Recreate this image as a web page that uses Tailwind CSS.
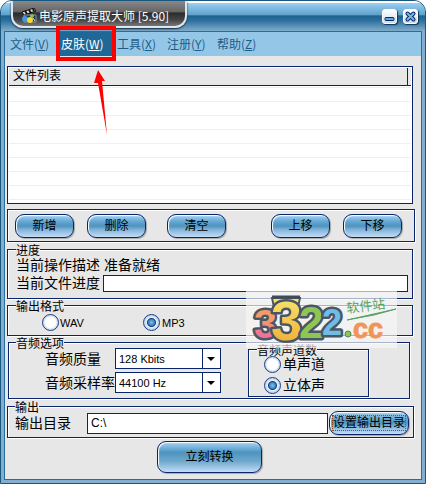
<!DOCTYPE html>
<html lang="zh-CN">
<head>
    <meta charset="UTF-8">
    <meta name="viewport" content="width=device-width, initial-scale=1.0">
    <title>电影原声提取大师 [5.90]</title>
    <script src="https://cdn.jsdelivr.net/npm/@tailwindcss/browser@4"></script>
</head>
<body class="bg-white min-h-screen flex flex-col text-black text-[12px] leading-4 font-['Liberation_Sans','Noto_Sans_CJK_SC',sans-serif]">

    <div class="relative flex-1 flex flex-col rounded-t-xl overflow-hidden bg-[#84aed0] border border-[#185880]">

        <!-- Title bar -->
        <header class="h-[30px] shrink-0 flex items-start justify-between border-t-2 border-white pl-[10px] pr-[7px] bg-[linear-gradient(#9bd0f2_0%,#5c9fca_44%,#1c628f_45%,#2c6f9c_62%,#7faccd_100%)]">
            <div class="-mt-[2px] h-[27px] w-[176px] flex items-center gap-[2px] pt-1 pl-2 text-white border-2 border-t-0 border-[#dce6ec] rounded-b-xl shadow-[0_1px_2px_#123] bg-[linear-gradient(#888_0%,#666_42%,#2c2c2c_48%,#444_75%,#777_100%)] font-['Noto_Sans_CJK_SC',sans-serif]">
                <svg class="w-4 h-4 shrink-0" viewBox="0 0 16 16">
                    <path d="M1 4L13 0L15 3L3 7Z" fill="#ddd" stroke="#111"/>
                    <path d="M4 3l2 3M8 2l2 3M12 1l1 2" stroke="#111" stroke-width="2"/>
                    <path d="M3 7h12v7H3z" fill="#203040" stroke="#8899a5"/>
                    <circle cx="4" cy="11" r="3" fill="#4795de"/>
                    <circle cx="9" cy="12" r="3" fill="#f1dc37"/>
                    <circle cx="11" cy="8" r="2" fill="#7bc354"/>
                    <path d="M12 10l2 3" stroke="#eee"/>
                </svg>
                <h1 class="whitespace-nowrap">电影原声提取大师 [5.90]</h1>
            </div>
            <div class="flex gap-[6px] mt-[6px]">
                <button aria-label="最小化" class="w-[15px] h-[15px] rounded-[3px] border border-white bg-linear-to-b from-white to-[#cfdbe5] shadow-[1px_1px_1px_#0b3858]">
                    <svg viewBox="0 0 13 13"><rect x="2" y="7.500" width="9" height="3" rx="1" fill="#5eaedb" stroke="#08246b"/></svg>
                </button>
                <button aria-label="关闭" class="w-[15px] h-[15px] rounded-[3px] border border-white bg-linear-to-b from-white to-[#cfdbe5] shadow-[1px_1px_1px_#0b3858]">
                    <svg viewBox="0 0 13 13">
                        <path d="M3.500 3.500L9.500 9.500M9.500 3.500L3.500 9.500" stroke="#08246b" stroke-width="4" stroke-linecap="round"/>
                        <path d="M3.500 3.500L9.500 9.500M9.500 3.500L3.500 9.500" stroke="#76bbe0" stroke-width="2" stroke-linecap="round"/>
                    </svg>
                </button>
            </div>
        </header>

        <div class="flex-1 flex flex-col mx-[3px] mb-[3px] border border-t-0 border-[#2a6d9c] bg-[#e7e7e7]">

            <!-- Menu -->
            <nav class="h-[25px] shrink-0 flex items-stretch bg-[#94c7e7] border-t border-[#2a6d9c] text-[#1f5c85] font-['Noto_Sans_CJK_SC',sans-serif]">
                <a href="#" class="w-[52px] pl-[5px] flex items-center">文件(<u>V</u>)</a>
                <a href="#" class="relative w-[55px] pl-1 flex items-center bg-[#1f6796] text-white">皮肤(<u>W</u>)
                    <span class="absolute -left-[1px] -top-[6px] w-[60px] h-[35px] border-4 border-[#fe0000] z-10"></span>
                </a>
                <a href="#" class="w-[50px] pl-[5px] flex items-center">工具(<u>X</u>)</a>
                <a href="#" class="w-[50px] pl-[5px] flex items-center">注册(<u>Y</u>)</a>
                <a href="#" class="w-[50px] pl-[5px] flex items-center">帮助(<u>Z</u>)</a>
            </nav>

            <main class="flex flex-col pt-[10px] pl-[2px] pr-2">

                <!-- File list -->
                <section class="h-[138px] border border-[#08246b] bg-white p-px">
                    <table class="w-full border-collapse">
                        <thead>
                            <tr class="h-[17px] bg-[#e7e7e7] border-b border-[#08246b]">
                                <th class="p-0 pl-1 text-left font-normal leading-4 border-r border-[#08246b]">文件列表</th>
                                <th class="p-0 w-1"></th>
                            </tr>
                        </thead>
                    </table>
                    <div class="h-[117px] bg-[repeating-linear-gradient(#fff_0px,#fff_1px,#efefef_1px,#efefef_2px,#fff_2px,#fff_14px)]"></div>
                </section>

                <!-- List actions -->
                <section class="mt-[5px] -mr-[2px] h-[33px] border border-[#08246b] shadow-[1px_1px_0_#fff,inset_1px_1px_0_#fff] flex items-center pl-[7px] pr-3">
                    <button class="w-[59px] h-6 rounded-[9px] border border-[#08246b] bg-[linear-gradient(#a9d4f2_0%,#64a7d3_30%,#4e94bf_50%,#8ab8dc_70%,#c3dcf6_100%)] shadow-[1px_1px_1px_#aaa,inset_1px_1px_1px_#fff]">新增</button>
                    <button class="ml-[13px] w-[59px] h-6 rounded-[9px] border border-[#08246b] bg-[linear-gradient(#a9d4f2_0%,#64a7d3_30%,#4e94bf_50%,#8ab8dc_70%,#c3dcf6_100%)] shadow-[1px_1px_1px_#aaa,inset_1px_1px_1px_#fff]">删除</button>
                    <button class="ml-[21px] w-[59px] h-6 rounded-[9px] border border-[#08246b] bg-[linear-gradient(#a9d4f2_0%,#64a7d3_30%,#4e94bf_50%,#8ab8dc_70%,#c3dcf6_100%)] shadow-[1px_1px_1px_#aaa,inset_1px_1px_1px_#fff]">清空</button>
                    <button class="ml-auto w-[59px] h-6 rounded-[9px] border border-[#08246b] bg-[linear-gradient(#a9d4f2_0%,#64a7d3_30%,#4e94bf_50%,#8ab8dc_70%,#c3dcf6_100%)] shadow-[1px_1px_1px_#aaa,inset_1px_1px_1px_#fff]">上移</button>
                    <button class="ml-[13px] w-[59px] h-6 rounded-[9px] border border-[#08246b] bg-[linear-gradient(#a9d4f2_0%,#64a7d3_30%,#4e94bf_50%,#8ab8dc_70%,#c3dcf6_100%)] shadow-[1px_1px_1px_#aaa,inset_1px_1px_1px_#fff]">下移</button>
                </section>

                <!-- Progress -->
                <fieldset class="mt-[2px] h-[55px] border border-[#08246b] shadow-[1px_1px_0_#fff,inset_1px_1px_0_#fff] pl-2 pr-1">
                    <legend class="pt-1 leading-[6px] bg-[#e7e7e7]">进度</legend>
                    <div class="mt-[2px] flex text-[14px] leading-[18px]">
                        <span class="w-[88px] shrink-0">当前操作描述</span>
                        <span>准备就绪</span>
                    </div>
                    <div class="flex items-center text-[14px] leading-[18px]">
                        <label for="progress" class="w-[87px] shrink-0">当前文件进度</label>
                        <input id="progress" readonly class="min-w-0 flex-1 h-[17px] border border-[#08246b] bg-white">
                    </div>
                </fieldset>

                <!-- Output format -->
                <fieldset class="mt-px h-[36px] border border-[#08246b] shadow-[1px_1px_0_#fff,inset_1px_1px_0_#fff] px-2">
                    <legend class="pt-1 leading-[6px] bg-[#e7e7e7]">输出格式</legend>
                    <div class="flex items-center pt-[4px] pl-[26px] text-[11px]">
                        <label class="w-[101px] flex items-center gap-px"><input type="radio" name="format" class="appearance-none w-[17px] h-[17px] rounded-full border border-[#1d3f85] bg-[radial-gradient(circle,#fff_5px,#b9cbe4_8px)] checked:bg-[radial-gradient(circle,#7cc3ea_0px,#3c86bd_3px,#123e80_4px,#e4eef6_5px,#b9cbe4_8px)]">WAV</label>
                        <label class="flex items-center gap-[2px]"><input type="radio" name="format" checked class="appearance-none w-[17px] h-[17px] rounded-full border border-[#1d3f85] bg-[radial-gradient(circle,#fff_5px,#b9cbe4_8px)] checked:bg-[radial-gradient(circle,#7cc3ea_0px,#3c86bd_3px,#123e80_4px,#e4eef6_5px,#b9cbe4_8px)]">MP3</label>
                    </div>
                </fieldset>

                <!-- Audio options -->
                <fieldset class="mt-px ml-px mr-[3px] h-[62px] border border-[#08246b] shadow-[1px_1px_0_#fff,inset_1px_1px_0_#fff] pl-[7px]">
                    <legend class="pt-1 leading-[6px] bg-[#e7e7e7]">音频选项</legend>
                    <div class="flex justify-between pr-10">
                        <div class="flex flex-col gap-[3px] pl-[29px] pt-px">
                            <div class="flex items-center">
                                <label for="quality" class="w-[70px] shrink-0 text-[14px]">音频质量</label>
                                <div class="relative">
                                    <select id="quality" class="appearance-none w-[106px] h-[21px] border border-[#08246b] bg-white pl-[3px] text-[11px] leading-4">
                                        <option>128 Kbits</option>
                                    </select>
                                    <svg class="absolute right-px top-px w-[18px] h-[19px] pointer-events-none" viewBox="0 0 18 19"><path d="M.5 0v19" stroke="#08246b"/><path d="M5 8h8l-4 4z"/></svg>
                                </div>
                            </div>
                            <div class="flex items-center">
                                <label for="rate" class="w-[70px] shrink-0 text-[14px]">音频采样率</label>
                                <div class="relative">
                                    <select id="rate" class="appearance-none w-[106px] h-[21px] border border-[#08246b] bg-white pl-[3px] text-[11px] leading-4">
                                        <option>44100 Hz</option>
                                    </select>
                                    <svg class="absolute right-px top-px w-[18px] h-[19px] pointer-events-none" viewBox="0 0 18 19"><path d="M.5 0v19" stroke="#08246b"/><path d="M5 8h8l-4 4z"/></svg>
                                </div>
                            </div>
                        </div>
                        <fieldset class="-mt-[3px] w-[121px] h-[53px] border border-[#08246b] shadow-[1px_1px_0_#fff,inset_1px_1px_0_#fff] pl-2">
                            <legend class="pt-1 leading-[6px] bg-[#e7e7e7]">音频声道数</legend>
                            <div class="flex flex-col gap-1 pl-[7px] mt-[2px] text-[14px] leading-[17px]">
                                <label class="flex items-center gap-[2px]"><input type="radio" name="channel" class="appearance-none w-[17px] h-[17px] rounded-full border border-[#1d3f85] bg-[radial-gradient(circle,#fff_5px,#b9cbe4_8px)] checked:bg-[radial-gradient(circle,#7cc3ea_0px,#3c86bd_3px,#123e80_4px,#e4eef6_5px,#b9cbe4_8px)]">单声道</label>
                                <label class="flex items-center gap-[2px]"><input type="radio" name="channel" checked class="appearance-none w-[17px] h-[17px] rounded-full border border-[#1d3f85] bg-[radial-gradient(circle,#fff_5px,#b9cbe4_8px)] checked:bg-[radial-gradient(circle,#7cc3ea_0px,#3c86bd_3px,#123e80_4px,#e4eef6_5px,#b9cbe4_8px)]">立体声</label>
                            </div>
                        </fieldset>
                    </div>
                </fieldset>

                <!-- Output folder -->
                <fieldset class="mt-[2px] -mr-px h-[37px] border border-[#08246b] shadow-[1px_1px_0_#fff,inset_1px_1px_0_#fff] pl-[7px] pr-1">
                    <legend class="pt-1 leading-[6px] bg-[#e7e7e7]">输出</legend>
                    <div class="flex items-center">
                        <label for="folder" class="w-[72px] shrink-0 text-[14px]">输出目录</label>
                        <input id="folder" value="C:\" class="min-w-0 flex-1 h-[21px] border border-[#08246b] bg-white pl-[3px] text-[12px]">
                        <button class="ml-px w-20 h-6 shrink-0 rounded-[9px] border border-[#08246b] bg-[linear-gradient(#a9d4f2_0%,#64a7d3_30%,#4e94bf_50%,#8ab8dc_70%,#c3dcf6_100%)] shadow-[1px_1px_1px_#aaa,inset_1px_1px_1px_#fff]"><span class="block mx-[2px] leading-[14px] border border-dotted border-[#8a4a28] whitespace-nowrap">设置输出目录</span></button>
                    </div>
                </fieldset>

                <button class="mt-[3px] ml-[150px] w-[105px] h-8 rounded-[9px] border border-[#08246b] bg-[linear-gradient(#a9d4f2_0%,#64a7d3_25%,#4e94bf_35%,#70a9cc_65%,#c3dcf6_100%)] shadow-[1px_1px_1px_#aaa,inset_1px_1px_1px_#fff]">立刻转换</button>
            </main>
        </div>

        <!-- Pointer arrow -->
        <svg class="absolute left-[93px] top-[69px] w-4 h-[67px] pointer-events-none" viewBox="0 0 16 67">
            <path d="M4 0L11 11L8 11L13 65L4 13L0 13Z" fill="#fe0000"/>
        </svg>

        <!-- Site badge -->
        <svg class="absolute left-[245px] top-[290px] w-[151px] h-[57px] pointer-events-none" viewBox="0 0 151 57">
            <defs>
                <linearGradient id="pink" gradientUnits="userSpaceOnUse" x1="0" y1="20" x2="0" y2="48"><stop offset=".3" stop-color="#f59a68"/><stop offset="1" stop-color="#ef6aa6"/></linearGradient>
                <linearGradient id="gold" gradientUnits="userSpaceOnUse" x1="0" y1="6" x2="0" y2="50"><stop offset="0" stop-color="#f7e36b"/><stop offset="1" stop-color="#f0b33c"/></linearGradient>
            </defs>
            <rect width="151" height="57" fill="#f8f8f8" fill-opacity=".68"/>
            <path d="M26 7H54L52 16H28Z" fill="#f7e36b" stroke="#4a5763" stroke-width="2"/>
            <text font-family="Liberation Sans" font-weight="bold" stroke="#4a5763" stroke-width="5" stroke-linejoin="round" paint-order="stroke"><tspan x="8" y="47" font-size="41" fill="url(#pink)">3</tspan><tspan x="25" y="49" font-size="56" fill="url(#gold)">3</tspan><tspan x="53" y="47" font-size="44" fill="#8ec653">2</tspan><tspan x="76" y="44" font-size="36" fill="#70bce5">2</tspan></text>
            <path d="M26 6H54" stroke="#3f4c58" stroke-width="3"/>
            <circle cx="102" cy="43" r="3" fill="#82c85c" stroke="#56804e"/>
            <text x="107" y="47" font-family="Liberation Sans" font-weight="bold" font-size="27" fill="#f29458" stroke="#f29458">cc</text>
            <text x="101" y="22" font-family="Noto Sans CJK SC" font-size="13" fill="#58a263" transform="rotate(-7 101 22)">软件站</text>
            <path d="M101 29L150 18L128 24Z" fill="#58a263" stroke="#58a263"/>
        </svg>
    </div>

</body>
</html>
